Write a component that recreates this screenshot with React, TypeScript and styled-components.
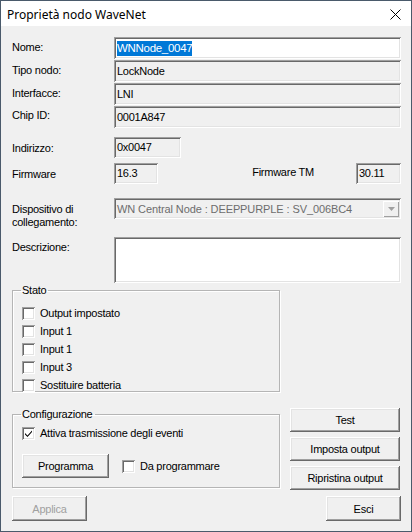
import React from "react";
import styled, { createGlobalStyle } from "styled-components";

const Global = createGlobalStyle`
  html, body { margin: 0; padding: 0; background: #f0f0f0; }
  body { font-family: "Liberation Sans", Arial, sans-serif; font-size: 11px; letter-spacing: -0.25px; color: #000; }
  * { box-sizing: border-box; }
`;

const Window = styled.div`
  width: 412px;
  height: 532px;
  border: 1px solid #4a5a6b;
  background: #f0f0f0;
  display: flex;
  flex-direction: column;
`;

const TitleBar = styled.div`
  height: 25px;
  background: #fff;
  display: flex;
  align-items: center;
  justify-content: space-between;
  padding: 0 6px 0 6px;
  font-family: "Noto Sans", "Liberation Sans", sans-serif;
  font-size: 12px;
  letter-spacing: 0;
  flex-shrink: 0;
`;

const Title = styled.span`
  margin-top: 1px;
`;

const CloseBtn = styled.span`
  width: 20px;
  display: flex;
  justify-content: center;
  margin-top: 1px;
`;

const Body = styled.div`
  flex: 1;
  padding: 11px 10px 0 11px;
  display: flex;
  flex-direction: column;
`;

const Row = styled.div<{ $mt?: number }>`
  display: flex;
  align-items: flex-start;
  margin-top: ${(p) => p.$mt ?? 0}px;
`;

const Label = styled.div<{ $pt?: number }>`
  width: 102px;
  flex-shrink: 0;
  padding-top: ${(p) => p.$pt ?? 4}px;
  line-height: 13px;
`;

const sunken = `
  box-shadow: inset 1px 1px 0 #a0a0a0, inset -1px -1px 0 #fff, inset 2px 2px 0 #696969, inset -2px -2px 0 #e3e3e3;
`;

const Field = styled.div<{ $w?: number; $h?: number; $white?: boolean }>`
  ${sunken}
  width: ${(p) => (p.$w ? `${p.$w}px` : "auto")};
  flex: ${(p) => (p.$w ? "none" : "1")};
  height: ${(p) => p.$h ?? 22}px;
  background: ${(p) => (p.$white ? "#fff" : "#f0f0f0")};
  padding: 0 3px;
  display: flex;
  align-items: center;
  line-height: 13px;
  white-space: nowrap;
  overflow: hidden;
`;

const Selected = styled.span`
  background: #0078d7;
  color: #fff;
  padding: 1px 0;
  font-size: 11.5px;
  letter-spacing: -0.3px;
`;

const Spacer = styled.div`
  flex: 1;
`;

const TmLabel = styled.div`
  padding-top: 3px;
  margin-right: 42px;
  line-height: 13px;
`;

const Combo = styled.div`
  ${sunken}
  flex: 1;
  height: 21px;
  background: #f0f0f0;
  color: #6d6d6d;
  display: flex;
  align-items: center;
  padding: 0 2px 0 3px;
  font-size: 11px;
  letter-spacing: -0.1px;
`;

const ComboText = styled.span`
  flex: 1;
`;

const ComboBtn = styled.div`
  width: 16px;
  height: 16px;
  box-shadow: inset 1px 1px 0 #fff, inset -1px -1px 0 #a0a0a0;
  background: #f0f0f0;
  display: flex;
  align-items: center;
  justify-content: center;
`;

const Group = styled.fieldset<{ $h: number; $mt?: number }>`
  margin: ${(p) => p.$mt ?? 0}px 0 0 0;
  padding: 0 0 0 9px;
  border: 1px solid #b5b5b5;
  box-shadow: inset 1px 1px 0 #fff, 1px 1px 0 #fff;
  height: ${(p) => p.$h}px;
  width: 268px;
  min-width: 0;
`;

const Legend = styled.legend`
  padding: 0 2px 0 1px;
  margin-left: -1px;
  line-height: 13px;
`;

const GroupGap = styled.div<{ $h: number }>`
  height: ${(p) => p.$h}px;
`;

const CheckRow = styled.label<{ $h?: number }>`
  display: flex;
  align-items: center;
  height: ${(p) => p.$h ?? 18}px;
  gap: 5px;
  line-height: 13px;
`;

const Box = styled.span`
  width: 13px;
  height: 13px;
  flex-shrink: 0;
  background: #fff;
  box-shadow: inset 1px 1px 0 #a0a0a0, inset -1px -1px 0 #fff, inset 2px 2px 0 #696969, inset -2px -2px 0 #e3e3e3;
  display: flex;
  align-items: center;
  justify-content: center;
`;

const Bottom = styled.div`
  display: flex;
  gap: 10px;
  margin-top: 16px;
  align-items: flex-start;
`;

const RightCol = styled.div`
  display: flex;
  flex-direction: column;
  gap: 5px;
  width: 110px;
`;

const Button = styled.button<{ $w?: number; $h?: number; $disabled?: boolean }>`
  width: ${(p) => (p.$w ? `${p.$w}px` : "100%")};
  height: ${(p) => p.$h ?? 24}px;
  border: none;
  background: #f0f0f0;
  font-family: "Liberation Sans", Arial, sans-serif;
  font-size: 11px;
  letter-spacing: -0.25px;
  color: ${(p) => (p.$disabled ? "#a0a0a0" : "#000")};
  box-shadow: inset -1px -1px 0 #696969, inset 1px 1px 0 #fff, inset -2px -2px 0 #a0a0a0, inset 2px 2px 0 #e3e3e3;
  padding: 0;
  cursor: default;
`;

const ProgRow = styled.div`
  display: flex;
  align-items: center;
  gap: 13px;
  margin-top: 11px;
`;

const Footer = styled.div`
  display: flex;
  justify-content: space-between;
  margin-top: 6px;
`;

const CheckMark = () => (
  <svg width="9" height="9" viewBox="0 0 9 9">
    <path d="M1 4 L3.5 6.5 L8 1.5 L8 3 L3.5 8 L1 5.5 Z" fill="#000" />
  </svg>
);

const Check = ({ checked }: { checked?: boolean }) => <Box>{checked ? <CheckMark /> : null}</Box>;

export default function App() {
  return (
    <>
      <Global />
      <Window>
        <TitleBar>
          <Title>Proprietà nodo WaveNet</Title>
          <CloseBtn>
            <svg width="11" height="11" viewBox="0 0 11 11">
              <path d="M0.5 0.5 L10.5 10.5 M10.5 0.5 L0.5 10.5" stroke="#000" strokeWidth="1" />
            </svg>
          </CloseBtn>
        </TitleBar>
        <Body>
          <Row>
            <Label>Nome:</Label>
            <Field $white>
              <Selected>WNNode_0047</Selected>
            </Field>
          </Row>
          <Row $mt={1}>
            <Label>Tipo nodo:</Label>
            <Field>LockNode</Field>
          </Row>
          <Row $mt={1}>
            <Label>Interfacce:</Label>
            <Field>LNI</Field>
          </Row>
          <Row $mt={1}>
            <Label $pt={3}>Chip ID:</Label>
            <Field>0001A847</Field>
          </Row>
          <Row $mt={9}>
            <Label $pt={5}>Indirizzo:</Label>
            <Field $w={67} $h={21}>0x0047</Field>
          </Row>
          <Row $mt={5}>
            <Label $pt={5}>Firmware</Label>
            <Field $w={44} $h={21}>16.3</Field>
            <Spacer />
            <TmLabel>Firmware TM</TmLabel>
            <Field $w={45} $h={21}>30.11</Field>
          </Row>
          <Row $mt={14}>
            <Label $pt={5}>
              Dispositivo di
              <br />
              collegamento:
            </Label>
            <Combo>
              <ComboText>WN Central Node : DEEPPURPLE : SV_006BC4</ComboText>
              <ComboBtn>
                <svg width="7" height="4" viewBox="0 0 7 4">
                  <path d="M0 0 L7 0 L3.5 4 Z" fill="#a0a0a0" />
                </svg>
              </ComboBtn>
            </Combo>
          </Row>
          <Row $mt={8}>
            <Label $pt={4}>Descrizione:</Label>
            <Field $white $h={46} />
          </Row>
          <Group $h={108} $mt={1}>
            <Legend>Stato</Legend>
            <GroupGap $h={7} />
            <CheckRow>
              <Check />
              Output impostato
            </CheckRow>
            <CheckRow>
              <Check />
              Input 1
            </CheckRow>
            <CheckRow>
              <Check />
              Input 1
            </CheckRow>
            <CheckRow>
              <Check />
              Input 3
            </CheckRow>
            <CheckRow>
              <Check />
              Sostituire batteria
            </CheckRow>
          </Group>
          <Bottom>
            <Group $h={80}>
              <Legend>Configurazione</Legend>
              <GroupGap $h={2} />
              <CheckRow $h={20}>
                <Check checked />
                Attiva trasmissione degli eventi
              </CheckRow>
              <ProgRow>
                <Button $w={87} $h={24}>
                  Programma
                </Button>
                <CheckRow>
                  <Check />
                  Da programmare
                </CheckRow>
              </ProgRow>
            </Group>
            <RightCol>
              <Button>Test</Button>
              <Button>Imposta output</Button>
              <Button>Ripristina output</Button>
            </RightCol>
          </Bottom>
          <Footer>
            <Button $w={75} $h={25} $disabled>
              Applica
            </Button>
            <Button $w={75} $h={25}>
              Esci
            </Button>
          </Footer>
        </Body>
      </Window>
    </>
  );
}
